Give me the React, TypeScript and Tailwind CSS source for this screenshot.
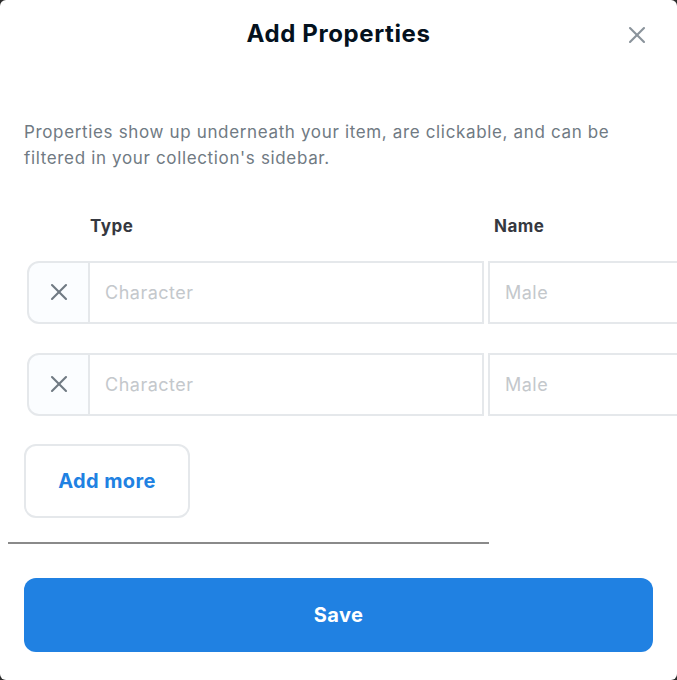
import { X } from 'lucide-react'

const rows = [
  { id: 1, type: 'Character', name: 'Male' },
  { id: 2, type: 'Character', name: 'Male' },
]

export default function App() {
  return (
    <div className="w-[677px] h-[680px] bg-[#2b2b2b]" style={{ fontFamily: 'Inter, "Noto Sans", sans-serif' }}>
      <div className="relative w-full h-full bg-white rounded-[6px] overflow-hidden">
        <div className="flex items-center justify-center h-[68px]">
          <h2 className="text-[24px] font-bold text-[#04111d] tracking-[0.6px]">Add Properties</h2>
          <button className="absolute right-[26px] top-[21px] text-[#8a939b]">
            <X size={28} strokeWidth={1.8} />
          </button>
        </div>

        <p className="mt-[51px] px-6 text-[17px] leading-[26px] text-[#707a83] tracking-[0.65px]">
          Properties show up underneath your item, are clickable, and can be filtered in your collection's sidebar.
        </p>

        <div className="flex mt-[43px] pl-[90px] text-[17px] font-bold text-[#353840] tracking-[0.5px]">
          <div className="w-[404px]">Type</div>
          <div>Name</div>
        </div>

        <div className="flex flex-col gap-[29px] mt-[21px] pl-[27px]">
          {rows.map(r => (
            <div key={r.id} className="flex h-[63px] w-[720px]">
              <button className="w-[63px] flex items-center justify-center bg-[#fbfdff] border-2 border-[#e5e8eb] rounded-l-[12px] text-[#707a83]">
                <X size={28} strokeWidth={1.8} />
              </button>
              <div className="w-[394px] flex items-center pl-[15px] border-2 border-l-0 border-[#e5e8eb] text-[18px] tracking-[0.5px] text-[#c4c8cc]">
                {r.type}
              </div>
              <div className="ml-[4px] flex-1 flex items-center pl-[15px] border-2 border-[#e5e8eb] text-[18px] tracking-[0.5px] text-[#c4c8cc]">
                {r.name}
              </div>
            </div>
          ))}
        </div>

        <div className="mt-[28px] pl-[24px]">
          <button className="w-[166px] h-[74px] rounded-[12px] border-2 border-[#e5e8eb] text-[20px] font-bold tracking-[0.4px] text-[#2081e2]">
            Add more
          </button>
        </div>

        <div className="mt-[24px] ml-[8px] w-[481px] h-[2px] bg-[#8a8a8a]" />

        <div className="mt-[34px] px-[24px]">
          <button className="w-full h-[74px] rounded-[12px] bg-[#2081e2] text-white text-[20px] font-bold tracking-[0.4px]">
            Save
          </button>
        </div>
      </div>
    </div>
  )
}
